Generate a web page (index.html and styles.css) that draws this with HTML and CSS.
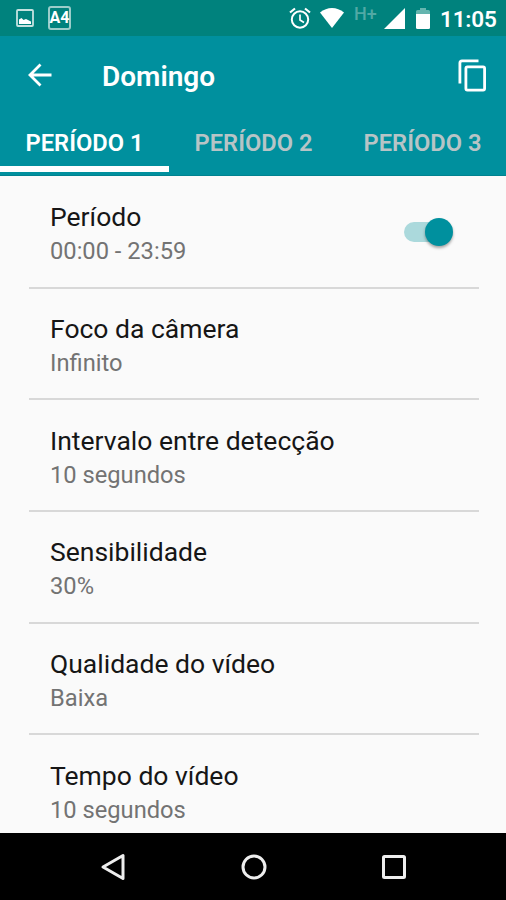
FILE: index.html
```html
<!DOCTYPE html>
<html lang="pt-BR">
<head>
  <meta charset="utf-8">
  <title>Domingo</title>
  <link rel="stylesheet" href="styles.css">
</head>
<body>
  <div class="statusbar">
    <svg class="icon-image" width="18" height="18" viewBox="0 0 18 18">
      <rect x="1" y="1" width="16" height="16" rx="1" fill="none" stroke="#c4e2df" stroke-width="1.8"/>
      <path d="M3 15V10.500l2.500-1.500 2 2 2.500-1 5 2.500V15z" fill="#fff"/>
    </svg>
    <div class="badge">A4</div>
    <svg class="icon-alarm" width="22" height="22" viewBox="0 0 22 22" fill="none" stroke="#fff">
      <circle cx="11" cy="12.500" r="8.200" stroke-width="2"/>
      <path d="M11 7.500v5.500l4 2.500" stroke-width="1.700"/>
      <path d="M1 5.500l5-4M21 5.500l-5-4" stroke-width="2.200"/>
    </svg>
    <svg class="icon-wifi" width="24" height="20" viewBox="0 0 24 20">
      <path d="M12 20L0 4.500Q5.500 0 12 0t12 4.500z" fill="#fff"/>
    </svg>
    <span class="network">H+</span>
    <svg class="icon-signal" width="21" height="21" viewBox="0 0 21 21">
      <path d="M21 0v21H0z" fill="#fff"/>
    </svg>
    <svg class="icon-battery" width="14" height="21" viewBox="0 0 14 21">
      <path d="M0 6V3.500Q0 2 1.500 2H4V0h6v2h2.500Q14 2 14 3.500V6z" fill="#65b5af"/>
      <path d="M0 6h14v13.500q0 1.500-1.500 1.500h-11Q0 21 0 19.500z" fill="#fff"/>
    </svg>
    <span class="clock">11:05</span>
  </div>

  <div class="header">
    <div class="toolbar">
      <svg class="back" width="24" height="24" viewBox="0 0 24 24" fill="none" stroke="#fff" stroke-width="2.800">
        <path d="M23.500 12H2.500M12.500 1.500L2 12l10.500 10.500"/>
      </svg>
      <h1>Domingo</h1>
      <svg class="copy" width="28" height="33" viewBox="0 0 28 33" fill="none" stroke="#fff" stroke-width="2.800">
        <path d="M20.500 1.900H4Q1.900 1.900 1.900 4v20.500"/>
        <rect x="7.900" y="7.900" width="18.700" height="23.200" rx="1.500"/>
      </svg>
    </div>
    <div class="tabs">
      <div class="tab active"><span>PERÍODO 1</span></div>
      <div class="tab"><span>PERÍODO 2</span></div>
      <div class="tab"><span>PERÍODO 3</span></div>
    </div>
  </div>

  <div class="list">
    <div class="item">
      <div>
        <div class="title">Período</div>
        <div class="value">00:00 - 23:59</div>
      </div>
      <div class="switch"><div class="thumb"></div></div>
    </div>
    <div class="item">
      <div>
        <div class="title">Foco da câmera</div>
        <div class="value">Infinito</div>
      </div>
    </div>
    <div class="item">
      <div>
        <div class="title">Intervalo entre detecção</div>
        <div class="value">10 segundos</div>
      </div>
    </div>
    <div class="item">
      <div>
        <div class="title">Sensibilidade</div>
        <div class="value">30%</div>
      </div>
    </div>
    <div class="item">
      <div>
        <div class="title">Qualidade do vídeo</div>
        <div class="value">Baixa</div>
      </div>
    </div>
    <div class="item">
      <div>
        <div class="title">Tempo do vídeo</div>
        <div class="value">10 segundos</div>
      </div>
    </div>
  </div>

  <div class="navbar">
    <svg width="28" height="28" viewBox="0 0 28 28"><path d="M24 2.500v23L4 14z"/></svg>
    <svg width="28" height="28" viewBox="0 0 28 28"><circle cx="14" cy="14" r="11"/></svg>
    <svg width="28" height="28" viewBox="0 0 28 28"><rect x="3.500" y="3.500" width="21" height="21" rx="1"/></svg>
  </div>
</body>
</html>
```

FILE: styles.css
```css
* {
  box-sizing: border-box;
}

body {
  display: flex;
  flex-direction: column;
  width: 506px;
  height: 900px;
  margin: 0;
  overflow: hidden;
  background-color: #fafafa;
  font-family: Roboto, sans-serif;
}

svg {
  display: block;
  flex: none;
}

/* status bar */
.statusbar {
  display: flex;
  align-items: center;
  flex: none;
  height: 36px;
  padding: 0 11px 0 16px;
  background-color: #00827d;
  color: white;
}

.badge {
  width: 23px;
  height: 24px;
  margin-left: 14px;
  border: 2px solid #9bcdca;
  border-radius: 3px;
  font-size: 16px;
  font-weight: bold;
  line-height: 20px;
  display: flex;
  justify-content: center;
}

.icon-alarm {
  margin-left: auto;
}

.icon-wifi {
  margin-left: 9px;
}

.network {
  width: 24px;
  margin: 0 6px 9px 10px;
  color: #51a9a5;
  font-size: 18px;
  font-weight: 500;
  line-height: 18px;
}

.icon-battery {
  margin: 0 10px 0 11px;
}

.clock {
  width: 55px;
  margin-top: 1px;
  font-size: 22.500px;
  font-weight: 600;
  letter-spacing: -0.2px;
}

/* app bar */
.header {
  flex: none;
  height: 140px;
  background-color: #00909e;
  border-bottom: 1px solid #008290;
  color: white;
}

.toolbar {
  display: flex;
  align-items: center;
  height: 78px;
  padding: 0 20px 0 28px;
}

.toolbar h1 {
  margin: 3px 0 0 50px;
  font-size: 28px;
  font-weight: 600;
}

.copy {
  margin-left: auto;
}

.tabs {
  display: flex;
  height: 58px;
}

.tab {
  width: 169px;
  flex: none;
  border-bottom: 6px solid transparent;
  color: #b7c4c6;
  font-size: 23.700px;
  font-weight: 600;
  line-height: 59px;
  text-align: center;
}

.tab.active {
  border-color: white;
  color: white;
}

/* settings */
.list {
  flex: 1;
  padding: 1px 27px 0 29px;
  overflow: hidden;
}

.item {
  display: flex;
  justify-content: space-between;
  height: 111.700px;
  padding: 22.400px 29px 0 21px;
  border-bottom: 2px solid #d8d8d8;
}

.title {
  color: #161616;
  font-size: 26.500px;
  line-height: 36px;
}

.value {
  color: #737373;
  font-size: 23.700px;
  line-height: 32px;
}

.switch {
  width: 46px;
  height: 20px;
  margin-top: 23px;
  border-radius: 10px;
  background-color: #abd9dc;
  display: flex;
  align-items: center;
  justify-content: flex-end;
}

.thumb {
  width: 28px;
  height: 28px;
  margin-right: -3px;
  flex: none;
  border-radius: 50%;
  background-color: #00909e;
  box-shadow: 0 2px 3px rgba(0, 0, 0, 0.35);
}

/* bottom navigation */
.navbar {
  display: flex;
  align-items: center;
  justify-content: center;
  gap: 112.500px;
  flex: none;
  height: 67px;
  padding-left: 1px;
  background-color: black;
}

.navbar svg {
  fill: none;
  stroke: #eee;
  stroke-width: 3;
  stroke-linejoin: round;
}
```
